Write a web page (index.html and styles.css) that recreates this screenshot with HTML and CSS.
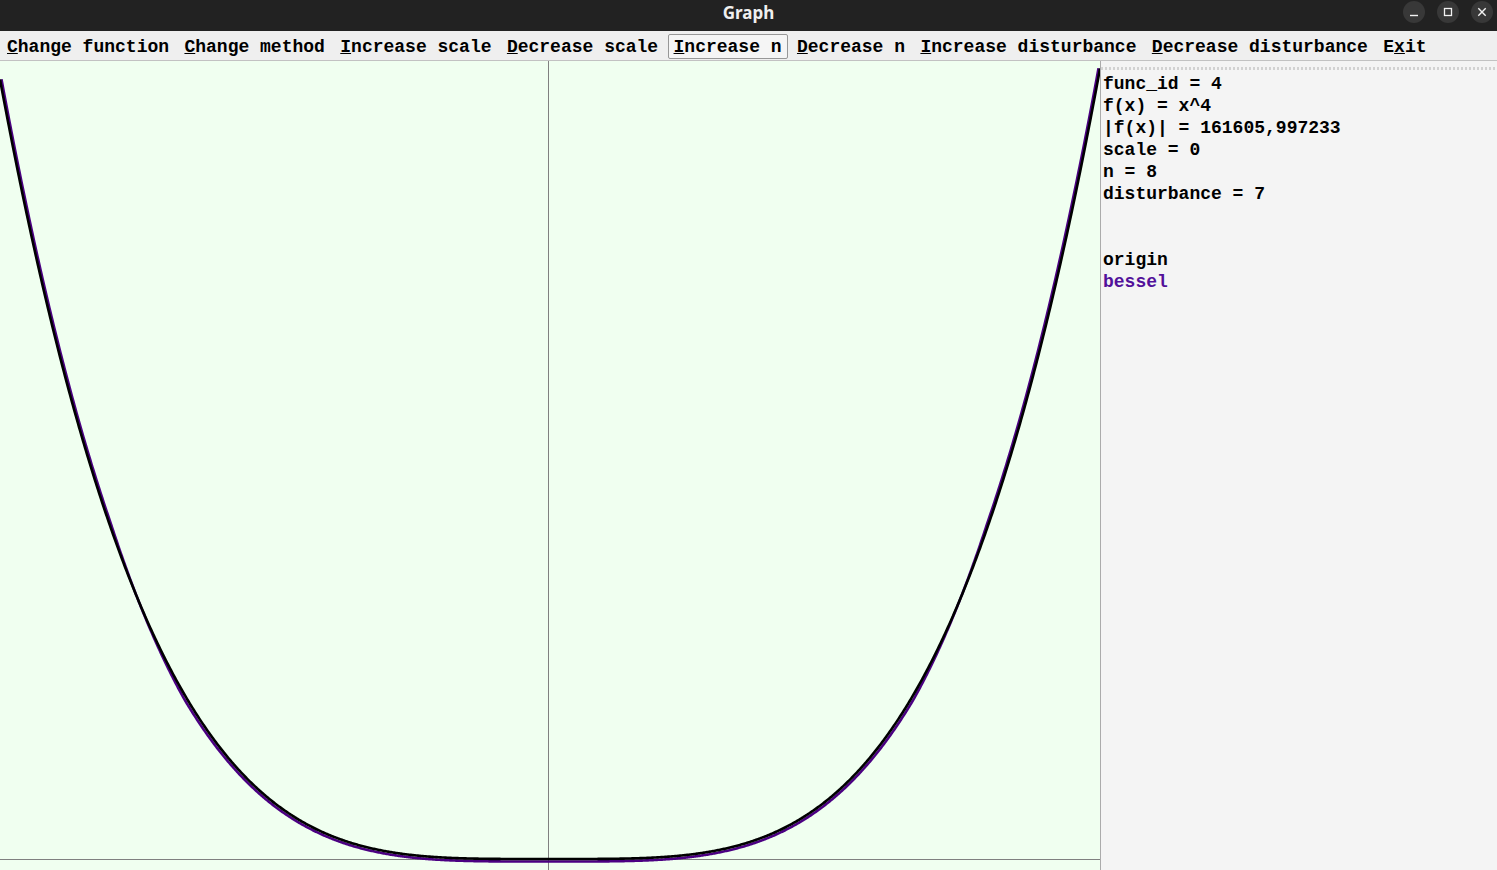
FILE: index.html
```html
<!DOCTYPE html>
<html lang="en">
<head>
<meta charset="utf-8">
<title>Graph</title>
<link rel="stylesheet" href="styles.css">
</head>
<body>
<div class="app">
  <header class="titlebar">
    <div class="tb-spacer"></div>
    <div class="title">Graph</div>
    <div class="winbtns">
      <span class="wbtn"><svg width="22" height="22" viewBox="0 0 22 22"><path d="M7 14.5h8" stroke="#f2f2f2" stroke-width="1.4" fill="none"/></svg></span>
      <span class="wbtn"><svg width="22" height="22" viewBox="0 0 22 22"><rect x="7.5" y="7.5" width="7" height="7" stroke="#f2f2f2" stroke-width="1.3" fill="none"/></svg></span>
      <span class="wbtn"><svg width="22" height="22" viewBox="0 0 22 22"><path d="M7.3 7.3l7.4 7.4M14.7 7.3l-7.4 7.4" stroke="#f2f2f2" stroke-width="1.4" fill="none"/></svg></span>
    </div>
  </header>
  <nav class="menubar">
    <span class="mitem"><u>C</u>hange function</span>
    <span class="mitem"><u>C</u>hange method</span>
    <span class="mitem"><u>I</u>ncrease scale</span>
    <span class="mitem"><u>D</u>ecrease scale</span>
    <span class="mitem active"><u>I</u>ncrease n</span>
    <span class="mitem"><u>D</u>ecrease n</span>
    <span class="mitem"><u>I</u>ncrease disturbance</span>
    <span class="mitem"><u>D</u>ecrease disturbance</span>
    <span class="mitem">E<u>x</u>it</span>
  </nav>
  <main class="workspace">
    <div class="canvas">
      <svg id="plot" class="plot" width="1100" height="809" viewBox="0 0 1100 809">
        <line x1="548.5" y1="0" x2="548.5" y2="809" stroke="#808080" stroke-width="1"/>
        <line x1="0" y1="798.5" x2="1100" y2="798.5" stroke="#808080" stroke-width="1"/>
        <polyline id="c-bessel" fill="none" stroke="#4b0082" stroke-width="2.6" stroke-linejoin="round" points=""/>
        <polyline id="c-origin" fill="none" stroke="#000000" stroke-width="2.6" stroke-linejoin="round" points=""/>
      </svg>
    </div>
    <aside class="info">
      <div class="dots"></div>
      <div class="lines">
        <div class="line">func_id = 4</div>
        <div class="line">f(x) = x^4</div>
        <div class="line">|f(x)| = 161605,997233</div>
        <div class="line">scale = 0</div>
        <div class="line">n = 8</div>
        <div class="line">disturbance = 7</div>
        <div class="line empty"></div>
        <div class="line empty"></div>
        <div class="line">origin</div>
        <div class="line bessel">bessel</div>
      </div>
    </aside>
  </main>
</div>
<script src="script.js"></script>
</body>
</html>
```

FILE: styles.css
```css
html, body {
  margin: 0;
  padding: 0;
}
body {
  width: 1497px;
  height: 870px;
  overflow: hidden;
  background: #f4f4f4;
}
.app {
  display: flex;
  flex-direction: column;
  width: 1497px;
  height: 870px;
}
.titlebar {
  height: 31px;
  flex: none;
  background: #222222;
  display: grid;
  grid-template-columns: 1fr auto 1fr;
}
.title {
  align-self: start;
  margin-top: 1px;
  font-family: "Noto Sans", "DejaVu Sans", sans-serif;
  font-weight: bold;
  font-size: 17px;
  line-height: 24px;
  color: #efefef;
}
.winbtns {
  justify-self: end;
  align-self: start;
  display: flex;
  gap: 12px;
  margin-top: 1px;
  padding-right: 4px;
}
.wbtn {
  width: 22px;
  height: 22px;
  border-radius: 50%;
  background: #383838;
  display: block;
}
.wbtn svg {
  display: block;
}
.menubar {
  box-sizing: border-box;
  height: 30px;
  flex: none;
  display: flex;
  align-items: flex-start;
  gap: 3.4px;
  padding: 3px 0 0 1px;
  background: #efefef;
  border-bottom: 1px solid #c2c2c2;
}
.mitem {
  box-sizing: border-box;
  height: 25px;
  padding: 1px 5px 0;
  border: 1px solid transparent;
  font-family: "Liberation Mono", "Courier New", monospace;
  font-weight: bold;
  font-size: 18px;
  line-height: 23px;
  color: #000;
  white-space: pre;
}
.mitem u {
  text-decoration: underline;
  text-decoration-thickness: 1px;
  text-underline-offset: 1px;
}
.mitem.active {
  border-color: #979797;
  background: #f5f5f5;
  border-radius: 2px;
}
.workspace {
  flex: 1;
  display: flex;
  height: 809px;
  overflow: hidden;
}
.canvas {
  flex: none;
  width: 1100px;
  height: 809px;
  background: #f0fff0;
  border-right: 1px solid #ababab;
  overflow: hidden;
}
.plot {
  display: block;
}
.info {
  flex: 1;
  background: #f4f4f4;
  padding-left: 2px;
}
.dots {
  height: 3px;
  margin: 6px 0 0 -2px;
  background: repeating-linear-gradient(90deg, #d2d2d2 0 2px, transparent 2px 4px);
}
.lines {
  margin-top: 3px;
  font-family: "Liberation Mono", "Courier New", monospace;
  font-weight: bold;
  font-size: 18px;
  line-height: 22px;
  color: #000;
}
.line {
  height: 22px;
  white-space: pre;
}
.line.bessel {
  color: #52109a;
}
```

FILE: script.js
```js
(function () {
  var cx = 549, base = 798, A = 785, half = 550, p = 3.8;
  var black = [], purple = [];
  for (var x = 0; x <= 1100; x += 1) {
    var dx = x - cx;
    var u = Math.abs(dx) / half;
    var y = base - A * Math.pow(u, p);
    var sgn = dx < 0 ? -1 : 1;
    var m = -A * p * Math.pow(u, p - 1) * sgn / half;
    black.push(x + ',' + y.toFixed(2));
    var o;
    if (u < 0.66) o = 2.5;
    else if (u > 0.8) o = -1.5;
    else o = 2.5 - 4 * (u - 0.66) / 0.14;
    var nn = Math.sqrt(1 + m * m), nx = -m / nn, ny = 1 / nn;
    purple.push((x + nx * o).toFixed(2) + ',' + (y + ny * o).toFixed(2));
  }
  document.getElementById('c-origin').setAttribute('points', black.join(' '));
  document.getElementById('c-bessel').setAttribute('points', purple.join(' '));
})();
```
